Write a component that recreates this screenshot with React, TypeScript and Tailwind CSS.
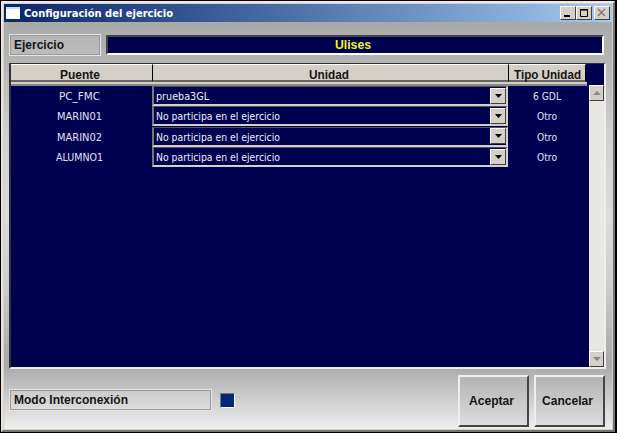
import type { ReactNode } from 'react';

const rows = [
  { bridge: 'PC_FMC', bw: 41, unit: 'prueba3GL', uw: 53, type: '6 GDL', tw: 28 },
  { bridge: 'MARIN01', bw: 45, unit: 'No participa en el ejercicio', uw: 124, type: 'Otro', tw: 20 },
  { bridge: 'MARIN02', bw: 45, unit: 'No participa en el ejercicio', uw: 124, type: 'Otro', tw: 20 },
  { bridge: 'ALUMNO1', bw: 47, unit: 'No participa en el ejercicio', uw: 124, type: 'Otro', tw: 20 },
];

/* A single line of text fitted to a fixed width. */
function Label({ children, w, className = '' }: { children: string; w: number; className?: string }) {
  return (
    <svg width={w} height={16} className={`block shrink-0 overflow-visible ${className}`}>
      <text x={0} y={12} textLength={w} lengthAdjust="spacingAndGlyphs" fill="currentColor">{children}</text>
    </svg>
  );
}

function WinButton({ children }: { children: ReactNode }) {
  return (
    <div className="flex h-[14px] w-4 items-center justify-center border border-b-[#404040] border-l-white border-r-[#404040] border-t-white bg-[#d4d0c8]">
      {children}
    </div>
  );
}

const arial = "font-['Liberation_Sans',sans-serif] text-[12px] font-bold text-[#151515]";
const head = 'flex h-[18px] items-center justify-center border-b-2 border-r border-t border-b-[#66665f] border-r-black border-t-white bg-[#d4d0c8] pt-1';
const panel = 'flex items-center border border-[#e4e4e4] bg-white/10 pl-1 outline-1 -outline-offset-2 outline-[#999]';
const button = 'flex h-[52px] w-[71px] items-center justify-center border-2 border-b-[#444] border-l-[#eee] border-r-[#444] border-t-[#eee] bg-linear-to-b from-[#b4b4b4] to-[#dddddd]';

export default function App() {
  return (
    <div className="h-[433px] w-[617px] overflow-hidden bg-black pl-px pt-px font-['DejaVu_Sans_Condensed','DejaVu_Sans',sans-serif] text-[11px]">
      <div className="flex h-[431px] w-[614px] flex-col border-2 border-b-[#77736f] border-l-[#e8e4e0] border-r-[#77736f] border-t-[#f0e8e6] bg-[#d4d0c8] p-px">
        <div className="flex h-[18px] shrink-0 items-center bg-linear-to-r from-[#0a246a] to-[#a6caf0] pl-0.5 pr-0.5">
          <div className="mr-1 h-3 w-[14px] border-t-2 border-[#b8e0ff] bg-white" />
          <Label w={149} className="font-bold text-white">Configuración del ejercicio</Label>
          <div className="ml-auto flex">
            <WinButton><svg width="12" height="10"><path d="M2 8h6" stroke="#000" strokeWidth="2" /></svg></WinButton>
            <WinButton><svg width="12" height="10"><path d="M2.5 1.5h7v7h-7zM2 2h8" fill="none" stroke="#000" /></svg></WinButton>
            <div className="ml-0.5"><WinButton><svg width="12" height="10"><path d="M2 1l7 7M9 1l-7 7" stroke="#777" strokeWidth="1.3" /></svg></WinButton></div>
          </div>
        </div>
        <div className="flex grow flex-col bg-[linear-gradient(to_bottom,#a9a9a9_0%,#b8b8b8_12%,#d0d0d0_28%,#dcdcdc_48%,#cccccc_65%,#a8a8a8_84%,#eeeeee_100%)] pl-[5px] pr-[6px] pt-3">
          <div className="flex h-[22px] items-center">
            <div className={`${panel} mr-[5px] h-[22px] w-[92px]`}>
              <Label w={50} className={arial}>Ejercicio</Label>
            </div>
            <div className="flex h-5 w-[498px] items-center justify-center border-2 border-b-white border-l-[#444] border-r-white border-t-[#444] bg-[#000050]">
              <Label w={36} className="mr-1 font-['Liberation_Sans',sans-serif] text-[12px] font-bold text-[#f4f41c]">Ulises</Label>
            </div>
          </div>
          <div className="mt-[7px] flex h-[306px] w-[597px] border-b-2 border-l-2 border-r-2 border-t border-b-[#eee] border-l-[#333] border-r-[#eee] border-t-[#333] bg-[#000050]">
            <div className="flex w-[578px] shrink-0 flex-col">
              <div className="flex">
                <div className={`${head} w-[142px] pr-1`}><Label w={40} className={arial}>Puente</Label></div>
                <div className={`${head} w-[356px] pr-1`}><Label w={40} className={arial}>Unidad</Label></div>
                <div className={`${head} w-[77px]`}><Label w={67} className={arial}>Tipo Unidad</Label></div>
              </div>
              <div className="h-[4px] w-[576px] border-b-2 border-t-2 border-b-[#888] border-t-[#d4d0c8]" />
              {rows.map((r) => (
                <div key={r.bridge} className="flex h-[20.3px] items-center text-[#e0e0f0]">
                  <div className="flex w-[141px] justify-center pr-1"><Label w={r.bw}>{r.bridge}</Label></div>
                  <div className="flex h-5 w-[356px] items-center justify-between border-b-2 border-l-2 border-r-2 border-t border-b-[#d4d0c8] border-l-[#777] border-r-[#d4d0c8] border-t-[#555] pl-0.5 text-[#f0f0f8]">
                    <Label w={r.uw} className="mt-px">{r.unit}</Label>
                    <div className="flex h-4 w-4 items-center justify-center border border-b-[#404040] border-l-white border-r-[#404040] border-t-white bg-[#d4d0c8]">
                      <svg width="7" height="4"><path d="M0 0h7L3.5 4z" fill="#000" /></svg>
                    </div>
                  </div>
                  <div className="flex w-[78px] justify-center"><Label w={r.tw}>{r.type}</Label></div>
                </div>
              ))}
            </div>
            <div className="mt-[21px] flex w-[15px] flex-col justify-between bg-[#e9e7e3]">
              <div className="flex h-4 items-center justify-center border border-b-[#404040] border-l-white border-r-[#404040] border-t-white bg-[#d4d0c8]">
                <svg width="8" height="4"><path d="M0 4h8L4 0z" fill="#888" /></svg>
              </div>
              <div className="flex h-4 items-center justify-center border border-b-[#404040] border-l-white border-r-[#404040] border-t-white bg-[#d4d0c8]">
                <svg width="8" height="4"><path d="M0 0h8L4 4z" fill="#888" /></svg>
              </div>
            </div>
          </div>
          <div className="mt-[6px] flex h-[52px] w-[596px] items-center">
            <div className={`${panel} mb-0.5 h-[22px] w-[203px]`}>
              <Label w={114} className={arial}>Modo Interconexión</Label>
            </div>
            <div className="mb-0.5 ml-2 size-[15px] border border-b-white border-l-[#777] border-r-white border-t-[#777] bg-[#002a78]" />
            <div className="ml-auto flex gap-[5px]">
              <div className={button}><Label w={45} className={`${arial} mr-1`}>Aceptar</Label></div>
              <div className={button}><Label w={51} className={`${arial} mr-1`}>Cancelar</Label></div>
            </div>
          </div>
        </div>
      </div>
    </div>
  );
}
